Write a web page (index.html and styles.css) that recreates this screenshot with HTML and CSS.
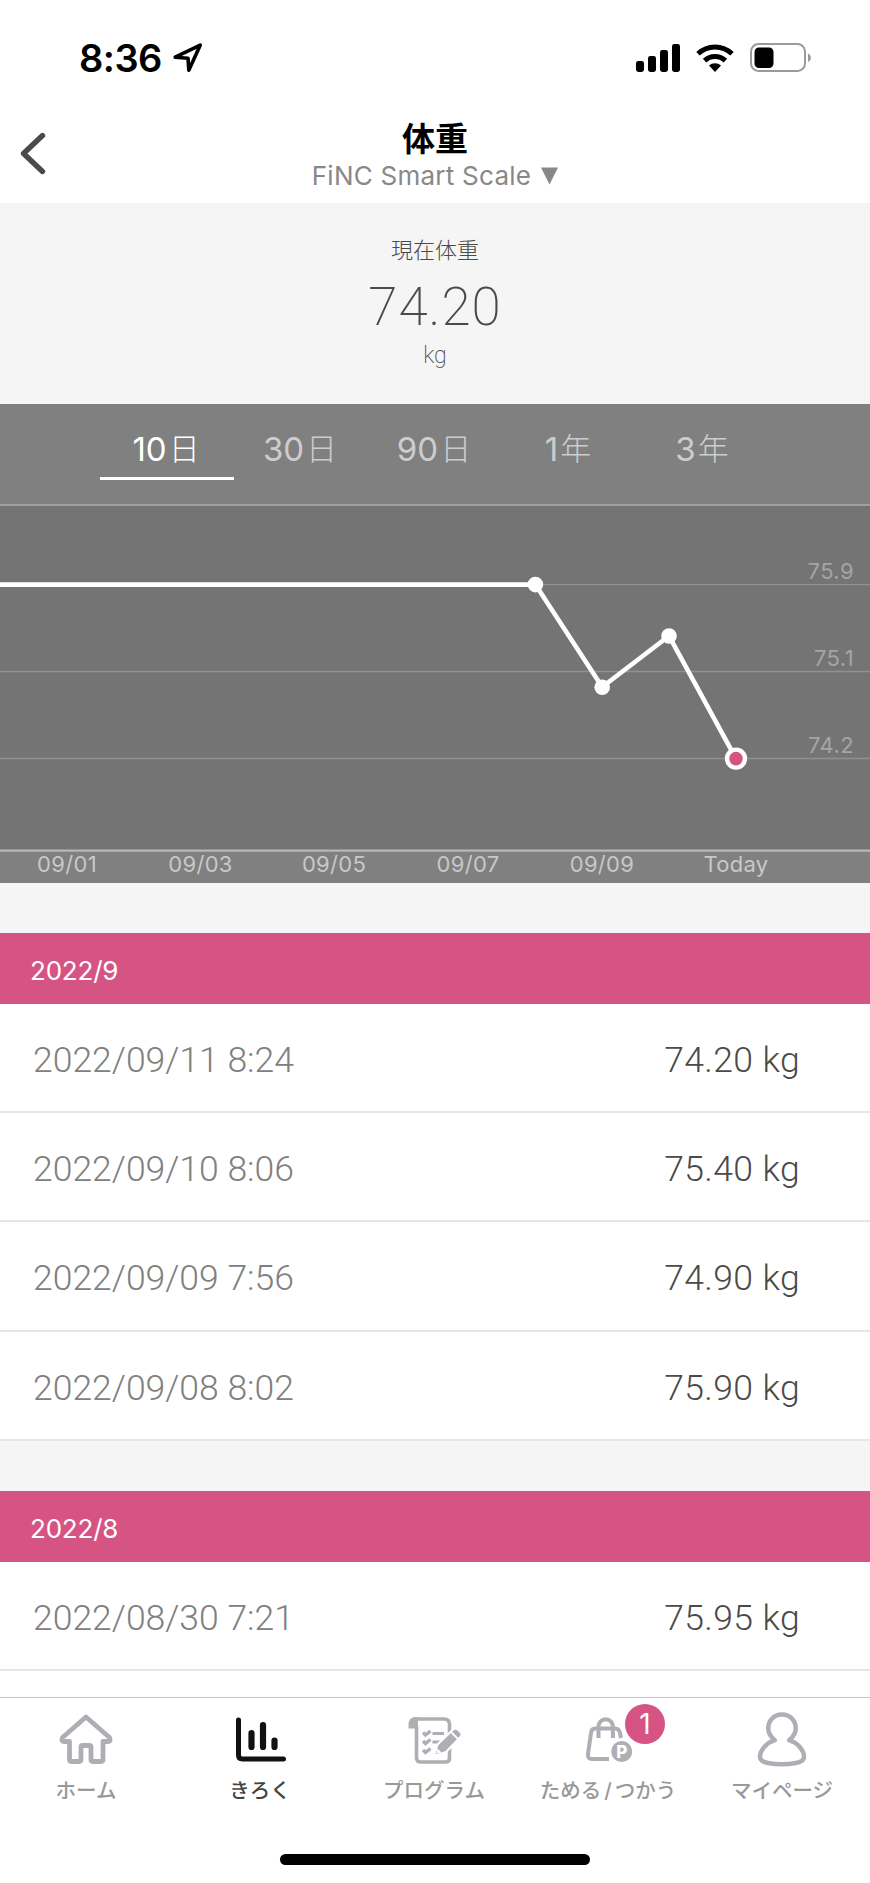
FILE: index.html
```html
<!DOCTYPE html>
<html lang="ja">
<head>
    <meta charset="UTF-8">
    <meta name="viewport" content="width=device-width, initial-scale=1.0">
    <title>体重</title>
    <link rel="stylesheet" href="styles.css">
</head>
<body>
    <div class="status-bar">
        <div class="status-left">
            <span class="clock">8:36</span>
            <svg class="location" width="32" height="32" viewBox="0 0 32 32"><path d="M3.2 15.2 L28.2 3.2 L16.8 28.2 L16 16.2 Z" fill="none" stroke="#000" stroke-width="3.6" stroke-linejoin="round"/></svg>
        </div>
        <div class="status-right">
            <svg width="44" height="28" viewBox="0 0 44 28">
                <rect x="0" y="17" width="8" height="11" rx="2.4"/>
                <rect x="12" y="12" width="8" height="16" rx="2.4"/>
                <rect x="24" y="6" width="8" height="22" rx="2.4"/>
                <rect x="36" y="0" width="8" height="28" rx="2.4"/>
            </svg>
            <svg class="wifi" width="38" height="28" viewBox="0 0 38 28">
                <path d="M2 9.8 A24.5 24.5 0 0 1 36 9.8" fill="none" stroke="#000" stroke-width="5"/>
                <path d="M8.6 16.6 A15 15 0 0 1 29.4 16.6" fill="none" stroke="#000" stroke-width="5"/>
                <path d="M19 28 L13 21.6 A9 9 0 0 1 25 21.6 Z"/>
            </svg>
            <svg width="62" height="30" viewBox="0 0 62 30">
                <rect x="1" y="1" width="54" height="27" rx="7.5" fill="none" stroke="#9a9a9a" stroke-width="2"/>
                <rect x="4.5" y="4.5" width="19" height="20.5" rx="4.5"/>
                <path d="M58 10.5 A4.6 4.6 0 0 1 58 19 Z" fill="#9a9a9a"/>
            </svg>
        </div>
    </div>

    <header class="nav">
        <svg class="back" width="28" height="46" viewBox="0 0 28 46"><path d="M23.5 4.5 L4.5 22.5 L23.5 40.5" fill="none" stroke="#4a4a4a" stroke-width="5.4" stroke-linecap="round" stroke-linejoin="round"/></svg>
        <h1>体重</h1>
        <div class="device">FiNC Smart Scale <svg width="17" height="18" viewBox="0 0 17 18"><path d="M0 0.5 H17 L8.5 17.5 Z" fill="#888"/></svg></div>
    </header>

    <section class="current">
        <div class="current-label">現在体重</div>
        <div class="current-value">74.20</div>
        <div class="current-unit">kg</div>
    </section>

    <section class="chart">
        <div class="tabs">
            <div class="tab active">10<span>日</span></div>
            <div class="tab">30<span>日</span></div>
            <div class="tab">90<span>日</span></div>
            <div class="tab">1<span>年</span></div>
            <div class="tab">3<span>年</span></div>
        </div>
        <svg class="plot" width="870" height="379" viewBox="0 504 870 379">
            <rect x="0" y="505" width="870" height="345" fill="#747474"/>
            <rect x="0" y="504" width="870" height="2" fill="#a0a0a0"/>
            <rect x="0" y="849.5" width="870" height="2.2" fill="#b8b8b8"/>
            <g stroke="#919191" stroke-width="1.3">
                <path d="M0 584.6 H870"/>
                <path d="M0 671.5 H870"/>
                <path d="M0 758.5 H870"/>
            </g>
            <g class="y-labels">
                <text x="854" y="579">75.9</text>
                <text x="854" y="666">75.1</text>
                <text x="854" y="753">74.2</text>
            </g>
            <polyline points="0,584.6 535.4,584.6 602.2,687 669,636 736,758.6" fill="none" stroke="#fff" stroke-width="4.6"/>
            <g fill="#fff">
                <circle cx="535.4" cy="584.6" r="7.8"/>
                <circle cx="602.2" cy="687.2" r="7.8"/>
                <circle cx="669" cy="636" r="7.8"/>
                <circle cx="736" cy="758.6" r="11.2"/>
            </g>
            <circle cx="736" cy="758.6" r="6.8" fill="#d55382"/>
            <g class="x-labels">
                <text x="67" y="871.5">09/01</text>
                <text x="200.5" y="871.5">09/03</text>
                <text x="334" y="871.5">09/05</text>
                <text x="468" y="871.5">09/07</text>
                <text x="602" y="871.5">09/09</text>
                <text x="736" y="871.5">Today</text>
            </g>
        </svg>
    </section>

    <section class="month">
        <h2>2022/9</h2>
        <div class="row"><span class="date">2022/09/11 8:24</span><span class="weight">74.20 kg</span></div>
        <div class="row"><span class="date">2022/09/10 8:06</span><span class="weight">75.40 kg</span></div>
        <div class="row"><span class="date">2022/09/09 7:56</span><span class="weight">74.90 kg</span></div>
        <div class="row"><span class="date">2022/09/08 8:02</span><span class="weight">75.90 kg</span></div>
    </section>

    <section class="month">
        <h2>2022/8</h2>
        <div class="row"><span class="date">2022/08/30 7:21</span><span class="weight">75.95 kg</span></div>
    </section>

    <nav class="tab-bar">
        <div class="item">
            <svg width="60" height="60" viewBox="0 0 60 60"><path d="M30 10 L6.5 30.5 Q4.5 35 8.5 34.5 H13.5 V52.5 Q13.5 54.5 15.5 54.5 H23 Q25 54.5 25 52.5 V40 Q25 38.5 26.5 38.5 H33.5 Q35 38.5 35 40 V52.5 Q35 54.5 37 54.5 H45 Q47 54.5 47 52.5 V34.5 H51.5 Q55.5 35 53.5 30.5 Z" fill="none" stroke="#aeaeb5" stroke-width="4.8" stroke-linejoin="round"/></svg>
            <span>ホーム</span>
        </div>
        <div class="item active">
            <svg width="60" height="60" viewBox="0 0 60 60"><path d="M8.5 13 V48 Q8.5 52 12.5 52 H53.5" fill="none" stroke="#111" stroke-width="5" stroke-linecap="round"/><path d="M21.5 26 V40 M33 18 V40 M44.5 33.5 V40" fill="none" stroke="#111" stroke-width="6.2" stroke-linecap="round"/></svg>
            <span>きろく</span>
        </div>
        <div class="item">
            <svg width="60" height="60" viewBox="0 0 60 60">
                <path d="M9 12 H40 Q45.5 12 45.5 17.5 V51 Q45.5 55 41.5 55 H16.5 Q12.5 55 12.5 51 V19" fill="none" stroke="#aeaeb5" stroke-width="3.6"/>
                <path d="M14 21.5 H4.5 V18 Q4.5 10.3 11 10.3 H14 Z" fill="#aeaeb5"/>
                <path d="M19 25.5 L21.5 28 L26.5 24 M19 34 L21.5 36.5 L26.5 32.5 M19 43 L21.5 45.5 L26.5 41.5" fill="none" stroke="#aeaeb5" stroke-width="3.4"/>
                <path d="M28.5 26.5 H40 M28.5 35 H38" fill="none" stroke="#aeaeb5" stroke-width="2.8"/>
                <path d="M30 49 L33.5 37.5 L49 22.5 Q51.5 20.5 54 22.5 L57 25.5 Q58.5 27.5 57 29.5 L42 45 L30 49 Z" fill="#aeaeb5" stroke="#fff" stroke-width="2.2"/>
                <path d="M46.5 24.5 L54.5 32.5" stroke="#fff" stroke-width="1.8"/>
                <path d="M33.5 41.5 L37.5 45.5 L32.5 46.5 Z" fill="#fff"/>
            </svg>
            <span>プログラム</span>
        </div>
        <div class="item">
            <svg width="60" height="60" viewBox="0 0 60 60">
                <path d="M43 31 L42 26 Q41 21.5 37 21.5 H17 Q13.5 21.5 13 26 L10 47 Q9.5 52 14 52 H31" fill="none" stroke="#aeaeb5" stroke-width="4"/>
                <path d="M20.5 31 V19.5 A7.2 7.2 0 0 1 34.9 19.5 V31" fill="none" stroke="#aeaeb5" stroke-width="4"/>
                <circle cx="43.7" cy="44.5" r="10.5" fill="#aeaeb5"/>
                <text class="point" x="43.7" y="50.5">P</text>
            </svg>
            <b class="badge">1</b>
            <span class="shop">ためる<i>/</i>つかう</span>
        </div>
        <div class="item">
            <svg width="60" height="60" viewBox="0 0 60 60"><path d="M30 7.5 C38.5 7.5 43.8 14 43.8 21.5 Q43.8 27.5 37.3 33.2 C45 35.5 52 43 52 50 Q52 54.5 44 56 Q30 58.5 16 56 Q8 54.5 8 50 C8 43 15 35.5 22.7 33.2 Q16.2 27.5 16.2 21.5 C16.2 14 21.5 7.5 30 7.5 Z" fill="none" stroke="#aeaeb5" stroke-width="4.5" stroke-linejoin="round"/></svg>
            <span>マイページ</span>
        </div>
        <div class="home-indicator"></div>
    </nav>
</body>
</html>
```

FILE: styles.css
```css
* { box-sizing: border-box; }
body { display: flex; flex-direction: column; height: 1883px; margin: 0; overflow: hidden; background: #fff; color: #4a4a4a; font-family: Inter, "Noto Sans CJK JP", sans-serif; }
svg { display: block; flex: none; }

.status-bar { display: flex; justify-content: space-between; height: 116px; padding: 42px 58px 0 79px; }
.status-left, .status-right { display: flex; height: 32px; align-items: center; }
.clock { color: #000; font-size: 38px; font-weight: 600; letter-spacing: -0.5px; }
.location { margin-left: 10px; }
.wifi { margin: 0 16px; }

.nav { position: relative; height: 87px; padding-top: 1px; text-align: center; }
.back { position: absolute; left: 19px; top: 15px; }
h1 { margin: 0; color: #000; font-size: 33px; line-height: 44px; font-weight: 700; }
.device { display: flex; justify-content: center; align-items: center; gap: 10px; margin-top: -1px; color: #888; font-size: 26px; line-height: 32px; letter-spacing: 0.25px; }

.current { height: 201px; padding-top: 31px; background: #f5f5f5; text-align: center; }
.current-label { font-size: 22px; line-height: 32px; font-weight: 300; }
.current-value { font-family: Roboto, sans-serif; font-size: 53px; line-height: 82px; font-weight: 200; letter-spacing: 1px; }
.current-unit { margin-top: -3px; font-family: Roboto, sans-serif; font-size: 23px; line-height: 22px; font-weight: 200; }

.chart { height: 479px; background: #808080; }
.tabs { display: flex; height: 100px; padding: 0 100px; }
.tab { width: 134px; height: 76px; padding: 20px 2px 0 0; color: #cdcdcd; font-size: 33px; line-height: 50px; font-weight: 370; text-align: center; }
.tab span { position: relative; top: -1px; margin-left: 2px; font-size: 31px; font-weight: 300; }
.tab.active { border-bottom: 3px solid #fff; color: #fff; }
.y-labels { fill: #a5a5a5; font-size: 22px; text-anchor: end; letter-spacing: 0.4px; }
.x-labels { fill: #c8c8c8; font-size: 22px; text-anchor: middle; letter-spacing: 0.3px; }

.month { border-top: 50px solid #f5f5f5; }
h2 { height: 71px; margin: 0; padding-left: 30px; background: #d65483; color: #fff; font-size: 26px; line-height: 76px; font-weight: 400; letter-spacing: -0.2px; }
.row { display: flex; justify-content: space-between; align-items: center; height: 109.2px; padding: 5px 70px 0 33px; border-bottom: 2px solid #e6e6e6; font-family: Roboto, sans-serif; font-size: 35.5px; font-weight: 300; }
.date { color: #808080; }
.weight { color: #4a4a4a; letter-spacing: 0.4px; }

.tab-bar { position: relative; display: flex; height: 186px; margin-top: auto; border-top: 1px solid #c4c4c4; padding-top: 9px; }
.item { position: relative; left: -1px; display: flex; flex-direction: column; align-items: center; width: 174px; color: #999; font-size: 20.5px; font-weight: 500; }
.item span { margin-top: 8px; line-height: 32px; white-space: nowrap; }
.item.active { color: #444; }
.shop i { margin: 0 3px; font-style: normal; }
.badge { position: absolute; left: 104px; top: -3px; width: 40px; height: 40px; border-radius: 50%; background: #d65483; color: #fff; font-size: 28px; line-height: 40px; font-weight: 400; text-align: center; }
.point { fill: #fff; font-size: 17px; font-weight: 800; text-anchor: middle; }
.home-indicator { position: absolute; left: 280px; bottom: 18px; width: 310px; height: 11px; border-radius: 6px; background: #000; }
```
